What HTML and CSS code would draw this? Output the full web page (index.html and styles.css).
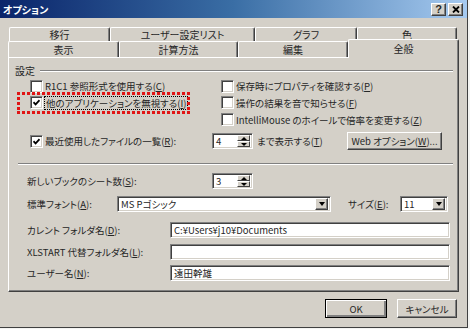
FILE: index.html
```html
<!DOCTYPE html>
<html>

<head>
    <title>オプション</title>
    <meta charset="utf-8">
    <link rel="stylesheet" href="styles.css">
</head>

<body>
    <div class="dialog">
        <div class="titlebar">
            <span class="title">オプション</span>
            <div class="caption-btns">
                <span class="cap-btn">?</span>
                <span class="cap-btn">
                    <svg width="8" height="7" viewBox="0 0 8 7"><path d="M1 0.5 L7 6.5 M7 0.5 L1 6.5" stroke="#000" stroke-width="1.8"/></svg>
                </span>
            </div>
        </div>

        <div class="tabs">
            <div class="tab-row back">
                <div class="tab" style="width: 101px">移行</div>
                <div class="tab" style="width: 145px">ユーザー設定リスト</div>
                <div class="tab" style="width: 102px">グラフ</div>
                <div class="tab" style="width: 100px">色</div>
            </div>
            <div class="tab-row front">
                <div class="tab" style="width: 111px">表示</div>
                <div class="tab" style="width: 119px">計算方法</div>
                <div class="tab" style="width: 110px">編集</div>
                <div class="tab selected" style="width: 111px">全般</div>
            </div>
        </div>

        <div class="panel">
            <div class="group-title"><span>設定</span><span class="line"></span></div>

            <div class="checks">
                <div class="col left">
                    <div class="chk"><span class="box"></span>R1C1 参照形式を使用する(<u>C</u>)</div>
                    <div class="chk marked">
                        <span class="box checked">
                            <svg width="7" height="7" viewBox="0 0 7 7"><path d="M0.5 3.2 L2.6 5.4 L6.5 1.2" stroke="#000" stroke-width="1.7" fill="none"/></svg>
                        </span>
                        <span class="focus">他のアプリケーションを無視する(<u>I</u>)</span>
                    </div>
                </div>
                <div class="col">
                    <div class="chk"><span class="box"></span>保存時にプロパティを確認する(<u>P</u>)</div>
                    <div class="chk"><span class="box"></span>操作の結果を音で知らせる(<u>F</u>)</div>
                    <div class="chk"><span class="box"></span>IntelliMouse のホイールで倍率を変更する(<u>Z</u>)</div>
                </div>
            </div>

            <div class="recent">
                <div class="chk recent-label">
                    <span class="box checked">
                        <svg width="7" height="7" viewBox="0 0 7 7"><path d="M0.5 3.2 L2.6 5.4 L6.5 1.2" stroke="#000" stroke-width="1.7" fill="none"/></svg>
                    </span>
                    最近使用したファイルの一覧(<u>R</u>):
                </div>
                <div class="spinner"><span class="value">4</span><span class="spin"><span class="up"></span><span class="down"></span></span></div>
                <span class="after-spin">まで表示する(<u>T</u>)</span>
                <button class="btn web-btn">Web オプション(<u>W</u>)...</button>
            </div>

            <div class="sep"></div>

            <div class="form-row sheets">
                <span class="label" style="width: 185px">新しいブックのシート数(<u>S</u>):</span>
                <div class="spinner"><span class="value">3</span><span class="spin"><span class="up"></span><span class="down"></span></span></div>
            </div>

            <div class="form-row font">
                <span class="label" style="width: 90px">標準フォント(<u>A</u>):</span>
                <div class="combo" style="width: 214px"><span class="value">MS Pゴシック</span><span class="arrow"></span></div>
                <span class="label size-label">サイズ(<u>E</u>):</span>
                <div class="combo" style="width: 48px"><span class="value">11</span><span class="arrow"></span></div>
            </div>

            <div class="form-row folder">
                <span class="label" style="width: 143px">カレント フォルダ名(<u>D</u>):</span>
                <div class="textbox">C:¥Users¥j10¥Documents</div>
            </div>

            <div class="form-row xlstart">
                <span class="label" style="width: 143px">XLSTART 代替フォルダ名(<u>L</u>):</span>
                <div class="textbox"></div>
            </div>

            <div class="form-row user">
                <span class="label" style="width: 143px">ユーザー名(<u>N</u>):</span>
                <div class="textbox">遠田幹雄</div>
            </div>
        </div>

        <div class="footer">
            <button class="btn ok">OK</button>
            <button class="btn cancel">キャンセル</button>
        </div>
    </div>
</body>

</html>
```

FILE: styles.css
```css
body {
    margin: 0;
    background: #f4f4f2;
    font-family: "Noto Sans CJK JP", sans-serif;
    font-size: 9.5px;
    font-feature-settings: "palt" 1;
    color: #262626;
}

.dialog {
    box-sizing: border-box;
    width: 468px;
    height: 328px;
    background: #d4d0c8;
    border-right: 1px solid #404040;
    border-bottom: 1px solid #404040;
}

/* title bar */
.titlebar {
    display: flex;
    align-items: center;
    height: 18px;
    padding: 0 4px 0 3px;
    background: linear-gradient(90deg, #0a246a 0%, #3a6ea5 50%, #a6caf0 100%);
}

.title {
    color: #fff;
    font-weight: bold;
    font-size: 10px;
}

.caption-btns {
    margin-left: auto;
    display: flex;
    gap: 2px;
}

.cap-btn {
    box-sizing: border-box;
    width: 15px;
    height: 13px;
    display: flex;
    align-items: center;
    justify-content: center;
    background: #d4d0c8;
    border: 1px solid;
    border-color: #fff #404040 #404040 #fff;
    box-shadow: inset -1px -1px #808080;
    font-family: "Liberation Sans", sans-serif;
    font-weight: bold;
    font-size: 11px;
    line-height: 1;
}

/* tabs */
.tabs {
    padding-top: 9px;
}

.tab-row {
    display: flex;
}

.tab-row.back {
    margin-left: 9px;
    height: 14px;
}

.tab-row.front {
    margin-left: 8px;
    height: 16px;
}

.tab {
    box-sizing: border-box;
    height: 100%;
    border: 1px solid;
    border-color: #fff #404040 transparent #fff;
    border-bottom: none;
    border-radius: 2px 2px 0 0;
    box-shadow: inset -1px 0 #808080;
    background: #d4d0c8;
    text-align: center;
    font-size: 10px;
    line-height: 13px;
}

.front .tab {
    padding-top: 1px;
    line-height: 14px;
}

.tab.selected {
    position: relative;
    z-index: 1;
    margin-top: -2px;
    height: 19px;
    padding-top: 2px;
    line-height: 13px;
}

/* panel */
.panel {
    box-sizing: border-box;
    margin-left: 8px;
    width: 451px;
    height: 235px;
    border: 1px solid;
    border-color: #fff #404040 #404040 #fff;
    box-shadow: inset -1px -1px #808080;
}

.group-title {
    display: flex;
    align-items: center;
    height: 15px;
    margin: 5px 5px 0 6px;
    font-size: 10px;
}

.group-title .line {
    flex: 1;
    margin-left: 5px;
    border-top: 1px solid #808080;
    border-bottom: 1px solid #fff;
}

.checks {
    display: flex;
    margin-left: 21px;
}

.col.left {
    width: 191px;
}

.chk {
    position: relative;
    display: flex;
    align-items: center;
    height: 16px;
    white-space: nowrap;
}

.chk + .chk {
    height: 17px;
}

.box {
    box-sizing: border-box;
    flex: none;
    width: 13px;
    height: 13px;
    margin-right: 2px;
    display: flex;
    align-items: center;
    justify-content: center;
    background: #fff;
    border: 1px solid;
    border-color: #808080 #fff #fff #808080;
    box-shadow: inset 1px 1px #404040, inset -1px -1px #d4d0c8;
}

.focus {
    outline: 1px dotted #000;
    padding: 0 1px;
    line-height: 12px;
}

/* red annotation around the highlighted option */
.chk.marked::after {
    content: "";
    position: absolute;
    left: -13px;
    right: 31px;
    top: -2px;
    bottom: -3px;
    background:
        repeating-linear-gradient(90deg, #e01414 0 3px, transparent 3px 5px) top / 100% 3px no-repeat,
        repeating-linear-gradient(90deg, #e01414 0 3px, transparent 3px 5px) bottom / 100% 3px no-repeat,
        repeating-linear-gradient(180deg, #e01414 0 3px, transparent 3px 5px) left / 3px 100% no-repeat,
        repeating-linear-gradient(180deg, #e01414 0 3px, transparent 3px 5px) right / 3px 100% no-repeat;
}

.recent {
    display: flex;
    align-items: center;
    height: 18px;
    margin: 4px 16px 0 21px;
}

.recent .chk {
    height: 18px;
}

.recent-label {
    width: 182px;
}

.after-spin {
    margin-left: 4px;
}

.sep {
    margin: 13px 5px 0 9px;
    border-top: 1px solid #808080;
    border-bottom: 1px solid #fff;
}

/* form rows */
.form-row {
    display: flex;
    align-items: center;
    height: 16px;
    padding-left: 18px;
}

.form-row.sheets {
    margin-top: 8px;
}

.form-row.font {
    margin-top: 7px;
}

.form-row.folder {
    margin-top: 10px;
}

.form-row.xlstart {
    margin-top: 6px;
}

.form-row.user {
    margin-top: 5px;
}

.label {
    white-space: nowrap;
}

.size-label {
    margin-left: 17px;
    width: 52px;
}

/* sunken controls */
.spinner,
.combo,
.textbox {
    box-sizing: border-box;
    height: 16px;
    display: flex;
    align-items: center;
    background: #fff;
    border: 1px solid;
    border-color: #808080 #fff #fff #808080;
    box-shadow: inset 1px 1px #404040, inset -1px -1px #d4d0c8;
    padding-left: 3px;
    white-space: nowrap;
}

.spinner {
    width: 41px;
    padding-right: 2px;
}

.textbox {
    width: 280px;
}

.value {
    flex: 1;
}

.spin {
    display: flex;
    flex-direction: column;
    width: 13px;
    height: 12px;
}

.spin .up,
.spin .down,
.combo .arrow {
    box-sizing: border-box;
    display: flex;
    align-items: center;
    justify-content: center;
    background: #d4d0c8;
    border: 1px solid;
    border-color: #fff #404040 #404040 #fff;
}

.spin .up,
.spin .down {
    height: 6px;
}

.spin .up::before {
    content: "";
    border-left: 3px solid transparent;
    border-right: 3px solid transparent;
    border-bottom: 3px solid #000;
}

.spin .down::before {
    content: "";
    border-left: 3px solid transparent;
    border-right: 3px solid transparent;
    border-top: 3px solid #000;
}

.combo {
    padding-right: 2px;
}

.combo .arrow {
    width: 13px;
    height: 12px;
    box-shadow: inset -1px -1px #808080;
}

.combo .arrow::before {
    content: "";
    border-left: 3.5px solid transparent;
    border-right: 3.5px solid transparent;
    border-top: 4px solid #000;
}

/* buttons */
.btn {
    box-sizing: border-box;
    height: 19px;
    padding: 0;
    background: #d4d0c8;
    border: 1px solid;
    border-color: #fff #404040 #404040 #fff;
    box-shadow: inset -1px -1px #808080;
    font-family: inherit;
    font-size: 9.5px;
    font-feature-settings: "palt" 1;
    color: #262626;
    white-space: nowrap;
}

.web-btn {
    width: 95px;
    height: 18px;
    margin-left: auto;
}

.footer {
    display: flex;
    justify-content: flex-end;
    gap: 10px;
    padding: 7px 10px 0 0;
}

.btn.ok {
    width: 62px;
    border-color: #000;
    box-shadow: inset 1px 1px #fff, inset -2px -2px #808080;
}

.btn.cancel {
    width: 60px;
}
```
